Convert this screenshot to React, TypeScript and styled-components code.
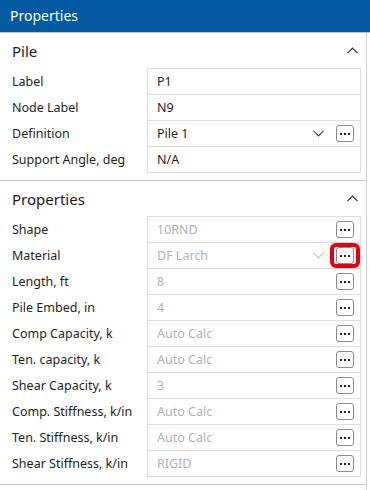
import React from "react";
import styled, { createGlobalStyle } from "styled-components";

const Global = createGlobalStyle`
  html, body {
    margin: 0;
    padding: 0;
    background: #ffffff;
  }
  body {
    font-family: "Noto Sans", "Open Sans", sans-serif;
    color: #1e1e1e;
  }
`;

const Frame = styled.div`
  width: 370px;
  height: 490px;
  overflow: hidden;
  background: #fff;
`;

const TitleBar = styled.div`
  height: 32px;
  background: #0159a1;
  color: #fff;
  font-size: 14px;
  line-height: 32px;
  padding-left: 10px;
  border-bottom: 1px solid #c4c4c4;
`;

const Panel = styled.div`
  width: 366px;
  border-right: 1px solid #d0d0d0;
  min-height: 457px;
`;

const Section = styled.section`
  border-bottom: 1px solid #c8c8c8;
  padding-bottom: 7px;
`;

const SectionHead = styled.div`
  height: 35px;
  display: flex;
  align-items: center;
  justify-content: space-between;
  padding: 0 8px 0 12px;
  font-size: 15px;
  color: #1a1a1a;
`;

const Rows = styled.div`
  display: flex;
  flex-direction: column;
`;

const Row = styled.div`
  display: grid;
  grid-template-columns: 147px 214px;
  height: 27px;
  margin-top: -1px;
  &:first-child {
    margin-top: 0;
  }
`;

const Label = styled.div`
  padding-left: 12px;
  font-size: 12.5px;
  line-height: 27px;
  color: #1e1e1e;
  white-space: nowrap;
`;

const Field = styled.div<{ $disabled?: boolean }>`
  height: 27px;
  box-sizing: border-box;
  border: 1px solid #dedede;
  display: flex;
  align-items: center;
  padding: 0 6px 0 9px;
  font-size: 12.5px;
  color: ${(p) => (p.$disabled ? "#b2b2b2" : "#1e1e1e")};
`;

const Value = styled.span`
  flex: 1;
  white-space: nowrap;
`;

const Chevron = styled.svg<{ $light?: boolean }>`
  width: 11px;
  height: 7px;
  margin-right: 12px;
  stroke: ${(p) => (p.$light ? "#c8c8c8" : "#444")};
`;

const MoreButton = styled.button<{ $flagged?: boolean }>`
  position: relative;
  width: 18px;
  height: 17px;
  box-sizing: border-box;
  border: 1px solid #8a8a8a;
  border-radius: 3px;
  background: #fff;
  padding: 0;
  display: flex;
  align-items: center;
  justify-content: center;
  gap: 2px;

  &::after {
    content: "";
    display: ${(p) => (p.$flagged ? "block" : "none")};
    position: absolute;
    top: -5px;
    bottom: -5px;
    left: -7px;
    right: -7px;
    border: 4px solid #e8000b;
    border-radius: 6px;
  }
`;

const Dot = styled.i`
  width: 2px;
  height: 2px;
  background: #222;
  display: block;
`;

function Dots({ flagged }: { flagged?: boolean }) {
  return (
    <MoreButton $flagged={flagged}>
      <Dot />
      <Dot />
      <Dot />
    </MoreButton>
  );
}

function Down({ light }: { light?: boolean }) {
  return (
    <Chevron $light={light} viewBox="0 0 11 7" fill="none" strokeWidth="1.2">
      <path d="M0.5 0.8 L5.5 5.8 L10.5 0.8" />
    </Chevron>
  );
}

function Up() {
  return (
    <svg width="11" height="7" viewBox="0 0 11 7" fill="none" stroke="#333" strokeWidth="1.2">
      <path d="M0.5 6.2 L5.5 1.2 L10.5 6.2" />
    </svg>
  );
}

type Item = {
  label: string;
  value: string;
  dropdown?: boolean;
  more?: boolean;
  flagged?: boolean;
};

const pile: Item[] = [
  { label: "Label", value: "P1" },
  { label: "Node Label", value: "N9" },
  { label: "Definition", value: "Pile 1", dropdown: true, more: true },
  { label: "Support Angle, deg", value: "N/A" },
];

const props: Item[] = [
  { label: "Shape", value: "10RND", more: true },
  { label: "Material", value: "DF Larch", dropdown: true, more: true, flagged: true },
  { label: "Length, ft", value: "8", more: true },
  { label: "Pile Embed, in", value: "4", more: true },
  { label: "Comp Capacity, k", value: "Auto Calc", more: true },
  { label: "Ten. capacity, k", value: "Auto Calc", more: true },
  { label: "Shear Capacity, k", value: "3", more: true },
  { label: "Comp. Stiffness, k/in", value: "Auto Calc", more: true },
  { label: "Ten. Stiffness, k/in", value: "Auto Calc", more: true },
  { label: "Shear Stiffness, k/in", value: "RIGID", more: true },
];

function Group({ title, items, disabled }: { title: string; items: Item[]; disabled?: boolean }) {
  return (
    <Section>
      <SectionHead>
        <span>{title}</span>
        <Up />
      </SectionHead>
      <Rows>
        {items.map((it) => (
          <Row key={it.label}>
            <Label>{it.label}</Label>
            <Field $disabled={disabled}>
              <Value>{it.value}</Value>
              {it.dropdown && <Down light={disabled} />}
              {it.more && <Dots flagged={it.flagged} />}
            </Field>
          </Row>
        ))}
      </Rows>
    </Section>
  );
}

export default function App() {
  return (
    <Frame>
      <Global />
      <TitleBar>Properties</TitleBar>
      <Panel>
        <Group title="Pile" items={pile} />
        <Group title="Properties" items={props} disabled />
      </Panel>
    </Frame>
  );
}
